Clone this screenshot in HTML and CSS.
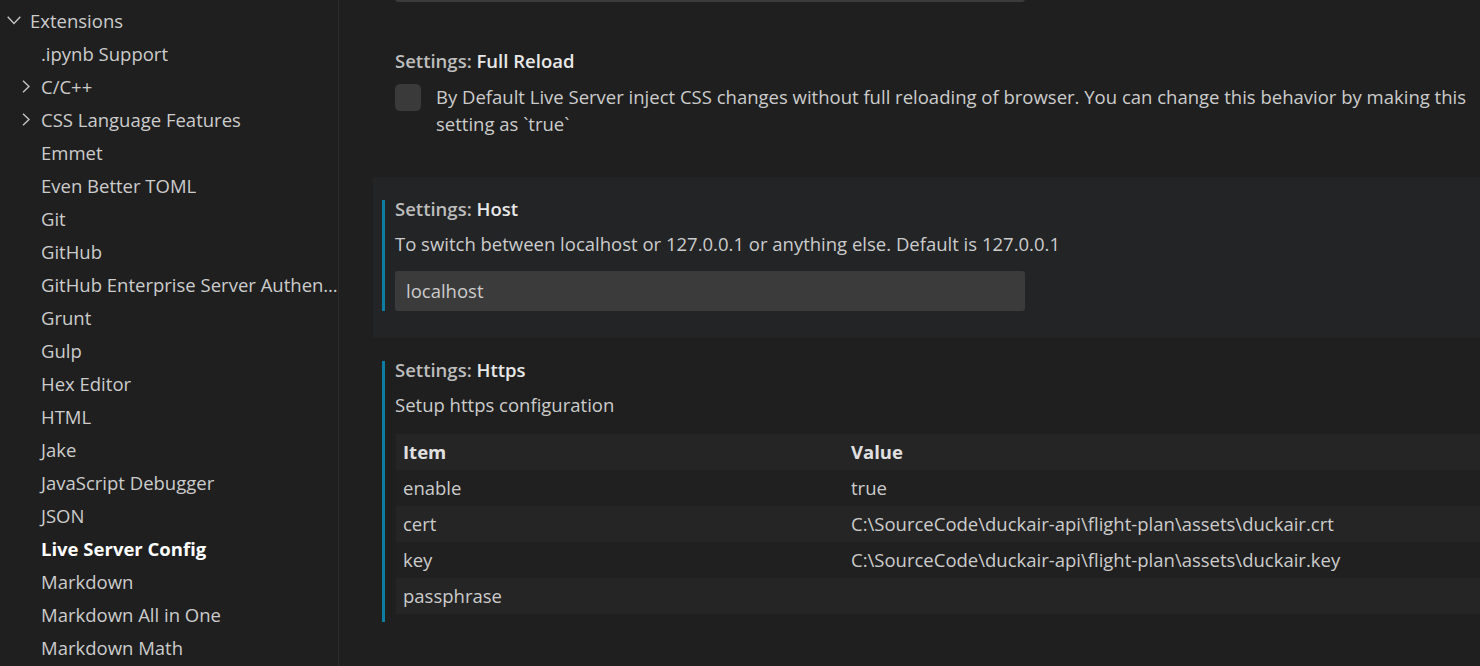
FILE: index.html
```html
<!DOCTYPE html>
<html lang="en">
<head>
<meta charset="utf-8">
<title>Settings</title>
<link rel="stylesheet" href="styles.css">
</head>
<body>
<div class="app">
  <nav class="toc">
    <div class="item root"><span class="tw tw-root"><svg width="14" height="9" viewBox="0 0 14 9"><polyline points="0.7,0.8 7,7.4 13.3,0.8" /></svg></span><span class="lbl">Extensions</span></div>
    <div class="item child"><span class="tw"></span><span class="lbl">.ipynb Support</span></div>
    <div class="item child"><span class="tw"><svg width="8" height="13" viewBox="0 0 8 13"><polyline points="1,0.8 7,6.5 1,12.2" /></svg></span><span class="lbl">C/C++</span></div>
    <div class="item child"><span class="tw"><svg width="8" height="13" viewBox="0 0 8 13"><polyline points="1,0.8 7,6.5 1,12.2" /></svg></span><span class="lbl">CSS Language Features</span></div>
    <div class="item child"><span class="tw"></span><span class="lbl">Emmet</span></div>
    <div class="item child"><span class="tw"></span><span class="lbl">Even Better TOML</span></div>
    <div class="item child"><span class="tw"></span><span class="lbl">Git</span></div>
    <div class="item child"><span class="tw"></span><span class="lbl">GitHub</span></div>
    <div class="item child"><span class="tw"></span><span class="lbl">GitHub Enterprise Server Authen…</span></div>
    <div class="item child"><span class="tw"></span><span class="lbl">Grunt</span></div>
    <div class="item child"><span class="tw"></span><span class="lbl">Gulp</span></div>
    <div class="item child"><span class="tw"></span><span class="lbl">Hex Editor</span></div>
    <div class="item child"><span class="tw"></span><span class="lbl">HTML</span></div>
    <div class="item child"><span class="tw"></span><span class="lbl">Jake</span></div>
    <div class="item child"><span class="tw"></span><span class="lbl">JavaScript Debugger</span></div>
    <div class="item child"><span class="tw"></span><span class="lbl">JSON</span></div>
    <div class="item child active"><span class="tw"></span><span class="lbl">Live Server Config</span></div>
    <div class="item child"><span class="tw"></span><span class="lbl">Markdown</span></div>
    <div class="item child"><span class="tw"></span><span class="lbl">Markdown All in One</span></div>
    <div class="item child"><span class="tw"></span><span class="lbl">Markdown Math</span></div>
  </nav>
  <main class="settings">
    <section class="row first">
      <div class="content">
        <div class="textbox"></div>
      </div>
    </section>
    <section class="row bool">
      <div class="content">
        <div class="title"><span class="cat">Settings: </span><span class="name">Full Reload</span></div>
        <div class="bool-line">
          <span class="checkbox"></span>
          <div class="desc">By Default Live Server inject CSS changes without full reloading of browser. You can change this behavior by making this setting as `true`</div>
        </div>
      </div>
    </section>
    <section class="row focused">
      <div class="content modified">
        <div class="title"><span class="cat">Settings: </span><span class="name">Host</span></div>
        <div class="desc">To switch between localhost or 127.0.0.1 or anything else. Default is 127.0.0.1</div>
        <div class="textbox value">localhost</div>
      </div>
    </section>
    <section class="row">
      <div class="content modified tablepad">
        <div class="title"><span class="cat">Settings: </span><span class="name">Https</span></div>
        <div class="desc">Setup https configuration</div>
        <div class="objtable">
          <div class="tr head"><div class="c1">Item</div><div class="c2">Value</div></div>
          <div class="tr"><div class="c1">enable</div><div class="c2">true</div></div>
          <div class="tr alt"><div class="c1">cert</div><div class="c2">C:\SourceCode\duckair-api\flight-plan\assets\duckair.crt</div></div>
          <div class="tr"><div class="c1">key</div><div class="c2">C:\SourceCode\duckair-api\flight-plan\assets\duckair.key</div></div>
          <div class="tr alt"><div class="c1">passphrase</div><div class="c2"></div></div>
        </div>
      </div>
    </section>
  </main>
</div>
</body>
</html>
```
FILE: styles.css
```css
html, body {
  margin: 0;
  padding: 0;
  background: #1f1f1f;
  height: 666px;
  overflow: hidden;
}
body {
  font-family: "Open Sans", "Noto Sans", sans-serif;
  font-size: 18.5px;
  color: #cccccc;
}
.app {
  display: flex;
  height: 666px;
}
.toc {
  width: 338px;
  flex: none;
  border-right: 1px solid #2b2b2b;
  padding-top: 3.5px;
  overflow: hidden;
  box-sizing: content-box;
}
.item {
  height: 33px;
  display: flex;
  align-items: center;
  white-space: nowrap;
}
.item .lbl {
  min-width: 0;
}
.item.root { padding-left: 7px; }
.tw {
  flex: none;
  display: flex;
  align-items: center;
}
.tw-root { width: 23px; }
.child { padding-left: 22px; }
.child .tw { width: 19px; }
.tw svg polyline {
  fill: none;
  stroke: #c5c5c5;
  stroke-width: 1.4;
}
.item.active .lbl {
  font-weight: 700;
  color: #ffffff;
}
.settings {
  flex: 1;
  min-width: 0;
  margin-top: -61px;
  padding-left: 34px;
  display: flex;
  flex-direction: column;
}
.row {
  padding: 23px 0 27px 9px;
}
.row.bool { padding-bottom: 40px; }
.row.focused { background: #232426; }
.content {
  border-left: 3px solid transparent;
  padding-left: 10px;
}
.content.modified { border-left-color: #0e7da2; }
.content.tablepad { padding-bottom: 8px; }
.title {
  height: 18px;
  line-height: 18px;
  font-weight: 600;
  white-space: nowrap;
}
.cat { color: #bdbdbd; }
.name { color: #e8e8e8; }
.desc {
  line-height: 27px;
  margin-top: 12.5px;
}
.bool-line {
  display: flex;
  align-items: flex-start;
  margin-top: 12.5px;
}
.bool-line .desc {
  margin-top: 0;
  padding-left: 15px;
  padding-right: 8px;
}
.checkbox {
  flex: none;
  width: 26px;
  height: 27px;
  margin-top: 1px;
  background: #3a3a3a;
  border-radius: 5px;
}
.textbox {
  width: 630px;
  height: 40px;
  background: #3b3b3b;
  border-radius: 3px;
  box-sizing: border-box;
}
.textbox.value {
  margin-top: 13.5px;
  padding-left: 11px;
  line-height: 40px;
  color: #cccccc;
}
.objtable {
  margin-top: 15.5px;
  margin-left: 1px;
}
.tr {
  display: flex;
  height: 36px;
  line-height: 36px;
  background: #202020;
  white-space: nowrap;
}
.tr.head, .tr.alt { background: #252525; }
.tr.head { font-weight: 700; color: #e0e0e0; }
.c1 { width: 448px; padding-left: 7px; box-sizing: border-box; flex: none; }
.c2 { padding-left: 7px; }
```
